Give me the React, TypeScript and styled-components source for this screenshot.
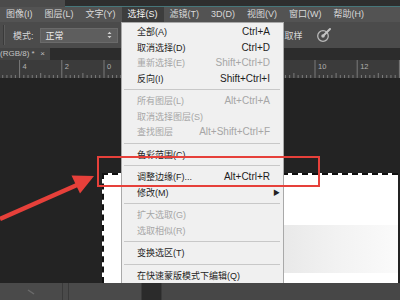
import React from 'react';
import styled, { createGlobalStyle } from 'styled-components';

const Global = createGlobalStyle`
  html, body { margin: 0; padding: 0; background: #232323; }
  body {
    width: 400px; height: 300px; overflow: hidden;
    font-family: "Liberation Sans", "Noto Sans CJK SC", sans-serif;
  }
`;

const Screen = styled.div`
  position: relative;
  width: 400px;
  height: 300px;
  overflow: hidden;
  display: grid;
  grid-template-rows: 7px 15px 26px 12px 18px 205px 17px;
  background: #232323;
`;

const TopStrip = styled.div`
  display: flex;
`;

const TopLeft = styled.div`
  width: 65px;
  background: #4b4b4b;
`;

const TopDark = styled.div`
  flex: 1;
  background: #2e2e2e;
  border-bottom: 1px solid #46767a;
`;

const MenuBar = styled.div`
  display: flex;
  overflow: hidden;
  background: #535353;
`;

const MenuTitle = styled.div<{ $active?: boolean }>`
  padding: 0 6px;
  font-size: 9px;
  line-height: 15px;
  white-space: nowrap;
  color: ${p => (p.$active ? '#f4f4f4' : '#d9d9d9')};
  background: ${p => (p.$active ? '#3d3d3d' : 'transparent')};
`;

const OptionsBar = styled.div`
  display: flex;
  align-items: center;
  padding-left: 3px;
  overflow: hidden;
  background: #4b4b4b;
  color: #d6d6d6;
  font-size: 9px;
`;

const Grip = styled.div`
  width: 1px;
  height: 20px;
  background: #3a3a3a;
  border-right: 1px solid #5c5c5c;
`;

const OptLabel = styled.div`
  margin-left: 8px;
  white-space: nowrap;
`;

const SelectBox = styled.div`
  margin-left: 6px;
  width: 78px;
  height: 15px;
  box-sizing: border-box;
  display: flex;
  align-items: center;
  justify-content: space-between;
  padding: 0 5px;
  background: #5e5e5e;
  border: 1px solid #6a6a6a;
  color: #ececec;
`;

const SampleText = styled.div`
  margin-left: 167px;
  white-space: nowrap;
`;

const IconSlot = styled.div`
  margin-left: 13px;
  width: 16px;
  height: 16px;
  display: flex;
`;

const TabRow = styled.div`
  display: flex;
  overflow: hidden;
  background: #2c2c2c;
`;

const Tab = styled.div`
  width: 50px;
  display: flex;
  align-items: center;
  background: #434343;
  color: #c4c4c4;
  font-size: 8px;
  line-height: 12px;
  white-space: nowrap;
`;

const TabClose = styled.span`
  margin-left: auto;
  margin-right: 5px;
  color: #bdbdbd;
`;

const RulerBar = styled.div`
  display: flex;
  overflow: hidden;
  background: #3b3b3b;
`;

const Workspace = styled.div`
  display: flex;
  padding: 95px 2px 0 102px;
  background: #232323;
`;

const Document = styled.div`
  flex: 1;
  border-top: 2px dashed #111;
  border-left: 2px dashed #111;
  background-color: #ffffff;
  background-image: linear-gradient(90deg, #e9e9e9, #f3f3f3 50%, #fbfbfb);
  background-repeat: no-repeat;
  background-position: 180px 50px;
  background-size: 118px 48px;
`;

const BottomBar = styled.div`
  display: flex;
  background: #474747;
  position: relative;
  z-index: 2;
`;

const BottomSeg = styled.div<{ $w: number; $dark?: boolean }>`
  width: ${p => p.$w}px;
  flex: none;
  display: flex;
  align-items: center;
  justify-content: center;
  background: ${p => (p.$dark ? '#2b2b2b' : '#4a4a4a')};
  border-right: 1px solid #3a3a3a;
`;

const DropMenu = styled.div`
  position: absolute;
  left: 121px;
  top: 22px;
  bottom: 17px;
  width: 163px;
  box-sizing: border-box;
  overflow: hidden;
  padding-top: 1px;
  background: #f0f0f0;
  border: 1px solid #a9a9a9;
  border-bottom: none;
  z-index: 1;
`;

const Row = styled.div<{ $disabled?: boolean }>`
  height: 15.5px;
  display: grid;
  grid-template-columns: 1fr auto 13px;
  align-items: center;
  padding-left: 15px;
  white-space: nowrap;
  color: ${p => (p.$disabled ? '#a6a6a6' : '#1d1d1d')};
`;

const RowLabel = styled.span`
  font-size: 9px;
`;

const RowKey = styled.span`
  font-size: 10px;
`;

const RowArrow = styled.span`
  font-size: 7px;
  padding-left: 3px;
  color: #222;
`;

const Sep = styled.div`
  height: 1px;
  margin: 3px 3px 3px 2px;
  background: #c8c8c8;
`;

const RedBox = styled.div`
  position: absolute;
  left: 97px;
  top: 156px;
  width: 223px;
  height: 31px;
  box-sizing: border-box;
  border: 2px solid #e6403a;
  z-index: 3;
`;

const ArrowSvg = styled.svg`
  position: absolute;
  left: 0;
  top: 165px;
  z-index: 3;
`;

type Item = { label?: string; key?: string; disabled?: boolean; sep?: boolean; sub?: boolean };

const items: Item[] = [
  { label: '全部(A)', key: 'Ctrl+A' },
  { label: '取消选择(D)', key: 'Ctrl+D' },
  { label: '重新选择(E)', key: 'Shift+Ctrl+D', disabled: true },
  { label: '反向(I)', key: 'Shift+Ctrl+I' },
  { sep: true },
  { label: '所有图层(L)', key: 'Alt+Ctrl+A', disabled: true },
  { label: '取消选择图层(S)', disabled: true },
  { label: '查找图层', key: 'Alt+Shift+Ctrl+F', disabled: true },
  { sep: true },
  { label: '色彩范围(C)' },
  { sep: true },
  { label: '调整边缘(F)...', key: 'Alt+Ctrl+R' },
  { label: '修改(M)', sub: true },
  { sep: true },
  { label: '扩大选取(G)', disabled: true },
  { label: '选取相似(R)', disabled: true },
  { sep: true },
  { label: '变换选区(T)' },
  { sep: true },
  { label: '在快速蒙版模式下编辑(Q)' },
];

const menuTitles = ['图像(I)', '图层(L)', '文字(Y)', '选择(S)', '滤镜(T)', '3D(D)', '视图(V)', '窗口(W)', '帮助(H)'];

function Ruler() {
  const origin = 104;
  const step = 4.22;
  const ticks: React.ReactNode[] = [];
  const labels: React.ReactNode[] = [];
  for (let i = -30; i <= 70; i++) {
    const x = origin + i * step;
    if (x < -2 || x > 402) continue;
    let h = 3;
    if (i % 10 === 0) h = 18;
    else if (i % 5 === 0) h = 5;
    ticks.push(<line key={`t${i}`} x1={x} x2={x} y1={18 - h} y2={18} stroke="#8c8c8c" strokeWidth={0.8} />);
    const hidden = x > 112 && x < 290;
    if (i % 10 === 0 && !hidden && x < 385) {
      labels.push(
        <text key={`l${i}`} x={x + 3} y={9} fontSize={7.5} fill="#b0b0b0" fontFamily="Liberation Sans, sans-serif">
          {Math.abs(i / 5)}
        </text>
      );
    }
  }
  return (
    <svg width={400} height={18}>
      {ticks}
      {labels}
    </svg>
  );
}

export default function App() {
  return (
    <>
      <Global />
      <Screen>
        <TopStrip>
          <TopLeft />
          <TopDark />
        </TopStrip>
        <MenuBar>
          {menuTitles.map(t => (
            <MenuTitle key={t} $active={t === '选择(S)'}>{t}</MenuTitle>
          ))}
        </MenuBar>
        <OptionsBar>
          <Grip />
          <OptLabel>模式:</OptLabel>
          <SelectBox>
            <span>正常</span>
            <svg width="5" height="8" viewBox="0 0 5 8">
              <path d="M0.5 3 L2.5 0.8 L4.5 3 Z M0.5 5 L2.5 7.2 L4.5 5 Z" fill="#d0d0d0" />
            </svg>
          </SelectBox>
          <SampleText>取样</SampleText>
          <IconSlot>
            <svg width="16" height="16" viewBox="0 0 16 16">
              <circle cx="7" cy="9" r="5.3" fill="none" stroke="#b8b8b8" strokeWidth="1.3" />
              <circle cx="7" cy="9" r="1.8" fill="#b8b8b8" />
              <path d="M7 9 L14 2" stroke="#c4c4c4" strokeWidth="2" strokeLinecap="round" />
            </svg>
          </IconSlot>
        </OptionsBar>
        <TabRow>
          <Tab>
            <span>(RGB/8) *</span>
            <TabClose>×</TabClose>
          </Tab>
        </TabRow>
        <RulerBar>
          <Ruler />
        </RulerBar>
        <Workspace>
          <Document />
        </Workspace>
        <BottomBar>
          <BottomSeg $w={62}>
            <svg width="8" height="6" viewBox="0 0 8 6">
              <path d="M1 1 L7 5" stroke="#6a6a6a" strokeWidth="1.5" />
            </svg>
          </BottomSeg>
          <BottomSeg $w={5} />
          <BottomSeg $w={72} />
          <BottomSeg $w={19} $dark />
        </BottomBar>

        <DropMenu>
          {items.map((it, idx) =>
            it.sep ? (
              <Sep key={idx} />
            ) : (
              <Row key={idx} $disabled={it.disabled}>
                <RowLabel>{it.label}</RowLabel>
                <RowKey>{it.key ?? ''}</RowKey>
                <RowArrow>{it.sub ? '▶' : ''}</RowArrow>
              </Row>
            )
          )}
        </DropMenu>

        <RedBox />
        <ArrowSvg width={100} height={60} viewBox="0 0 100 60">
          <path d="M0 54 L77 20" stroke="#e6403a" strokeWidth={4.5} />
          <polygon points="94,11 71.5,10.5 80,28.5" fill="#e6403a" />
        </ArrowSvg>
      </Screen>
    </>
  );
}
